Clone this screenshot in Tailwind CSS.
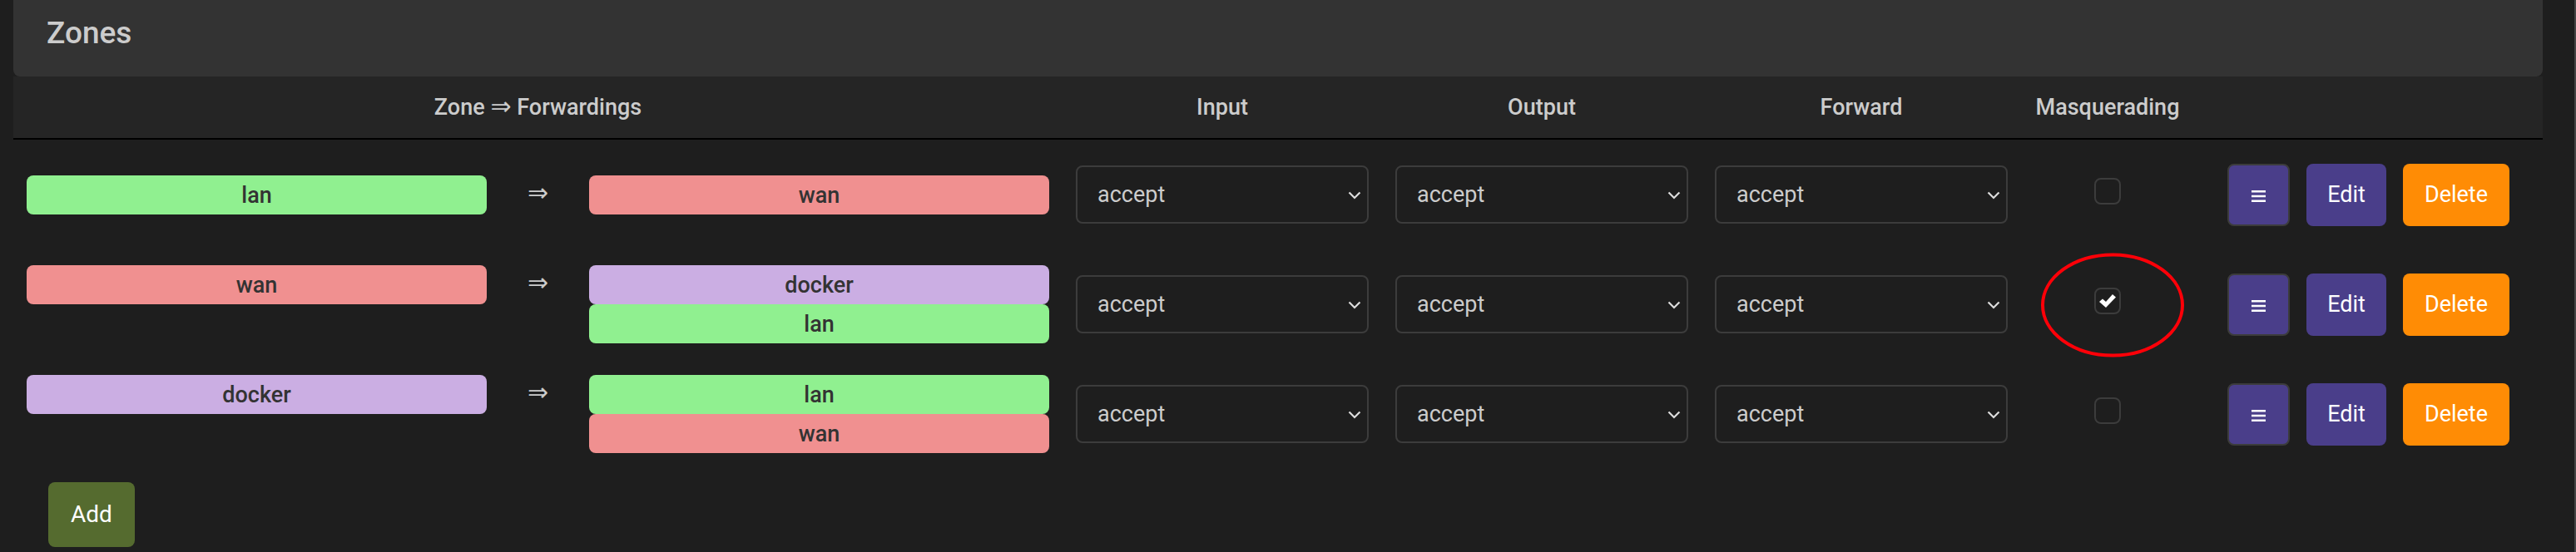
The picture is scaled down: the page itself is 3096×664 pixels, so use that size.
<!DOCTYPE html>
<html lang="en">
<head>
<meta charset="utf-8">
<meta name="viewport" content="width=device-width, initial-scale=1">
<title>Firewall - Zones</title>
<script src="https://cdn.jsdelivr.net/npm/@tailwindcss/browser@4"></script>
</head>
<body class="min-h-screen bg-[#1e1e1e] border-r-2 border-[#444] pl-4 pr-[38px] text-[27px] leading-[46px] text-[#ccc] font-medium font-[Roboto,'DejaVu_Sans',sans-serif]">
<main>
  <header class="h-[92px] rounded-b-lg bg-[#333] px-10 pt-4">
    <h1 class="text-[37px] leading-[48px] font-medium">Zones</h1>
  </header>
  <table class="w-full table-fixed border-separate border-spacing-0">
    <colgroup>
      <col>
      <col class="w-96">
      <col class="w-96">
      <col class="w-96">
      <col class="w-52">
      <col class="w-[419px]">
    </colgroup>
    <thead>
      <tr class="h-[76px] bg-[#252525] *:border-b-2 *:border-black">
        <th scope="col" class="p-0 font-medium">Zone <span class="text-[30px] leading-none">⇒</span> Forwardings</th>
        <th scope="col" class="p-0 font-medium">Input</th>
        <th scope="col" class="p-0 font-medium">Output</th>
        <th scope="col" class="p-0 font-medium">Forward</th>
        <th scope="col" class="p-0 font-medium">Masquerading</th>
        <td class="p-0"></td>
      </tr>
    </thead>
    <tbody id="zones"></tbody>
  </table>
  <div class="px-[42px] pt-4">
    <button type="button" class="h-[78px] w-[104px] rounded-lg bg-[#556b2f] text-[28px] font-normal text-white">Add</button>
  </div>
</main>
<script>
const colors = { lan: 'bg-[#90f090]', wan: 'bg-[#f09090]', docker: 'bg-[#cbaee3]' };
const zones = [
  { name: 'lan', to: ['wan'], masq: false },
  { name: 'wan', to: ['docker', 'lan'], masq: true },
  { name: 'docker', to: ['lan', 'wan'], masq: false },
];
const badge = n => `<div class="h-[47px] rounded-lg text-center leading-[48px] text-[#333] ${colors[n]}">${n}</div>`;
const select = (zone, label) => `
  <td class="px-4 py-0 align-middle">
    <div class="relative">
      <select aria-label="${label} for ${zone}" class="block h-[70px] w-full appearance-none rounded-lg border-2 border-[#3c3c3c] bg-transparent pl-6 pr-10 font-normal">
        <option>accept</option><option>reject</option><option>drop</option>
      </select>
      <svg class="pointer-events-none absolute right-2 top-7 h-4 w-[18px]" viewBox="0 0 18 16" fill="none" stroke="#ddd" stroke-width="2.200"><path d="M2.500 4.500L9 11L15.500 4.500"/></svg>
    </div>
  </td>`;
document.getElementById('zones').innerHTML = zones.map(z => `
  <tr class="h-[132px]">
    <td class="px-4 py-0 align-middle">
      <div class="flex items-start">
        <div class="flex-1">${badge(z.name)}</div>
        <div class="w-[123px] text-center text-[30px] leading-[42px]">⇒</div>
        <div class="flex-1">${z.to.map(badge).join('')}</div>
      </div>
    </td>
    ${select(z.name, 'Input')}${select(z.name, 'Output')}${select(z.name, 'Forward')}
    <td class="p-0 align-middle">
      <div class="relative flex justify-center pb-2">
        <input type="checkbox" aria-label="Masquerading for ${z.name}" ${z.masq ? 'checked' : ''} class="peer block size-8 appearance-none rounded-lg border-2 border-[#3c3c3c]">
        <svg class="pointer-events-none absolute top-2 hidden h-4 w-5 peer-checked:block" viewBox="0 0 20 16" fill="#fff"><path d="M0 9L4 5.500L8 9L16 0L20 3.500L8 16Z"/></svg>
        ${z.masq ? '<svg class="pointer-events-none absolute -top-[42px] left-[23px] h-[126px] w-[174px]" viewBox="0 0 174 126" fill="none" stroke="#ff0008" stroke-width="4"><ellipse cx="87" cy="63" rx="84" ry="60.500"/></svg>' : ''}
      </div>
    </td>
    <td class="py-0 pl-10 pr-10 align-middle">
      <div class="flex gap-5 text-[27px] font-normal text-white">
        <button type="button" aria-label="Drag to reorder ${z.name}" class="flex size-[75px] items-center justify-center rounded-lg border-2 border-[#3c3c3c] bg-[#4a3e8a]">
          <svg class="mt-1 h-[14px] w-[17px]" viewBox="0 0 17 14" fill="#fff"><path d="M0 0H17V2.500H0ZM0 5.700H17V8.200H0ZM0 11.500H17V14H0Z"/></svg>
        </button>
        <button type="button" class="h-[75px] w-24 rounded-lg bg-[#4a3e8a]">Edit</button>
        <button type="button" class="h-[75px] w-32 rounded-lg bg-[#ff8c05]">Delete</button>
      </div>
    </td>
  </tr>`).join('');
</script>
</body>
</html>
